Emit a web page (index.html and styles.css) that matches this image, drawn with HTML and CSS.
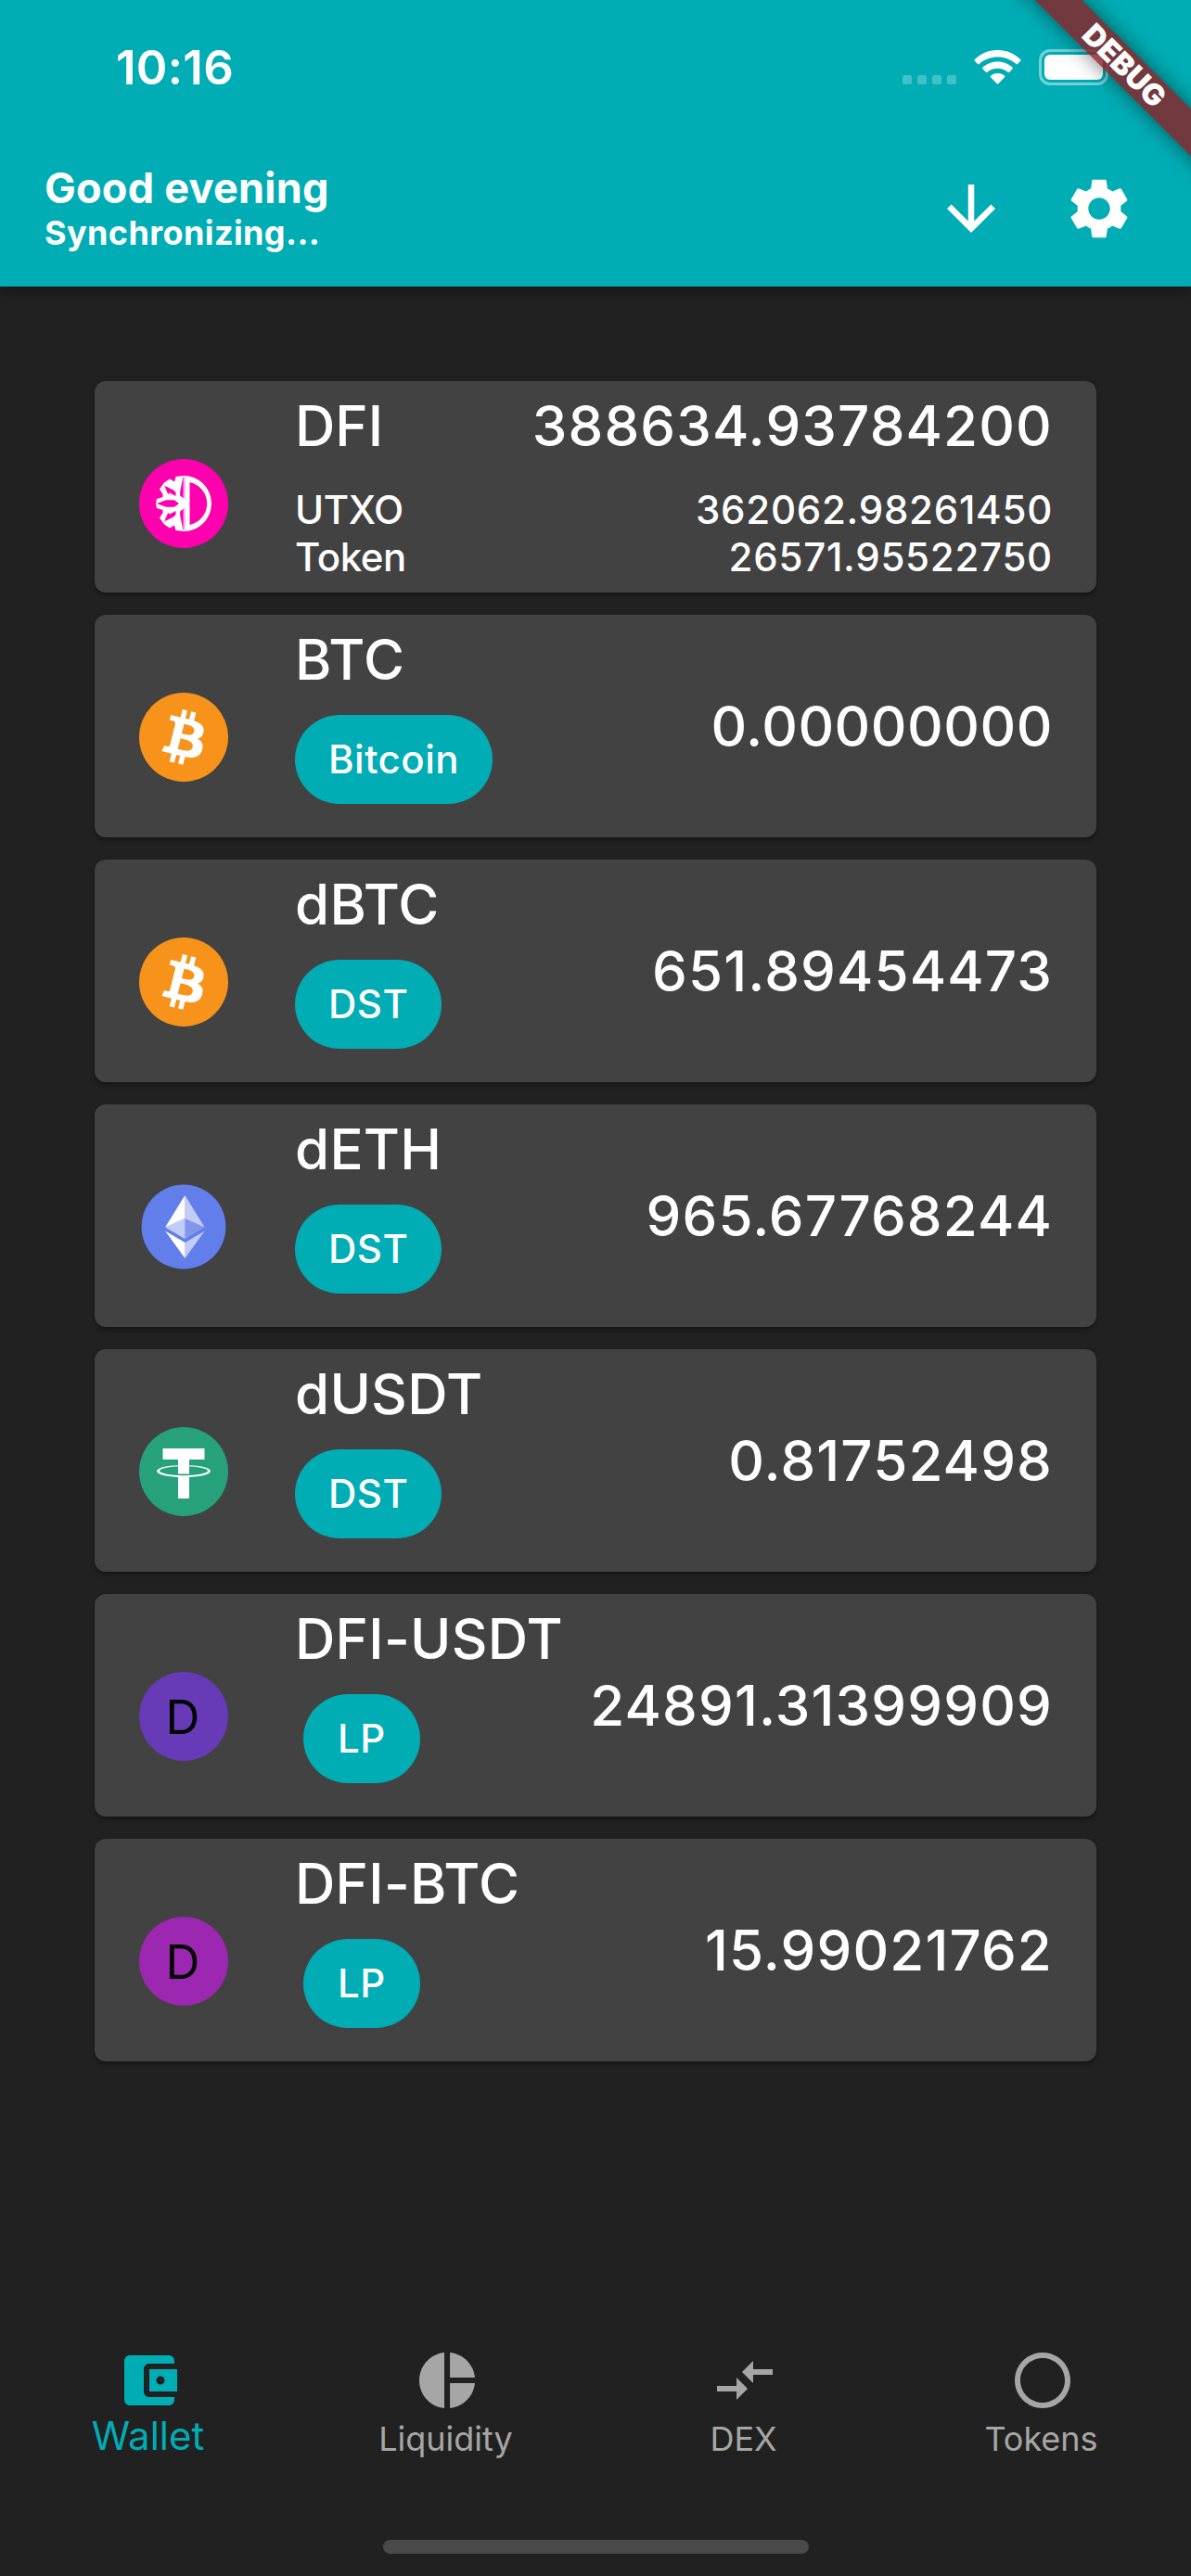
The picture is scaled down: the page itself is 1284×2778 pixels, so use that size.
FILE: index.html
```html
<!DOCTYPE html>
<html lang="en">
<head>
<meta charset="utf-8">
<title>Wallet</title>
<link rel="stylesheet" href="styles.css">
</head>
<body>
<header class="top">
  <div class="status">
    <span class="clock">10:16</span>
    <svg class="signal" viewBox="0 0 58 10"><rect width="10" height="10" rx="2.5"/><rect x="16" width="10" height="10" rx="2.5"/><rect x="32" width="10" height="10" rx="2.5"/><rect x="48" width="10" height="10" rx="2.5"/></svg>
    <svg class="wifi" viewBox="0 0 51 37"><path d="M25.500 0C35.500 0 44 4 50.200 10.200Q51 11 50.200 11.800L47 15Q46.200 15.800 45.400 15C40 10 33 7.500 25.500 7.500S11 10 5.600 15Q4.800 15.800 4 15L.8 11.800Q0 11 .8 10.200C7 4 15.500 0 25.500 0Z"/><path d="M25.500 12.500C32 12.500 37.500 15 41.500 18.700Q42.400 19.500 41.600 20.300L38.200 23.700Q37.400 24.500 36.500 23.700C33.500 21.200 29.700 19.800 25.500 19.800S17.500 21.200 14.500 23.700Q13.600 24.500 12.800 23.700L9.400 20.300Q8.600 19.500 9.500 18.700C13.500 15 19 12.500 25.500 12.500Z"/><path d="M25.500 25C28.500 25 31 26 33 27.700Q33.800 28.400 33 29.300L26.300 36.200Q25.500 37 24.700 36.200L18 29.300Q17.200 28.400 18 27.700C20 26 22.500 25 25.500 25Z"/></svg>
    <svg class="battery" viewBox="0 0 82 39"><rect x="1.500" y="1.500" width="72" height="36" rx="10.500" fill="none" stroke="#fff" stroke-opacity=".45" stroke-width="3"/><rect x="6" y="6" width="63" height="27" rx="6" fill="#fff"/><path d="M78 13.500Q82 16 82 19.500T78 25.500Z" fill="#fff" fill-opacity=".5"/></svg>
  </div>
  <div class="appbar">
    <div class="titles">
      <h1 class="greeting">Good evening</h1>
      <p class="sync">Synchronizing...</p>
    </div>
    <svg class="action" viewBox="0 0 24 24"><path d="M20 12l-1.410-1.410L13 16.170V4h-2v12.170l-5.580-5.590L4 12l8 8 8-8z"/></svg>
    <svg class="action" viewBox="0 0 24 24"><path d="M19.140 12.940c.04-.3.06-.61.06-.94 0-.32-.02-.64-.07-.94l2.030-1.580c.18-.14.23-.41.12-.61l-1.920-3.320c-.12-.22-.37-.29-.59-.22l-2.390.96c-.5-.38-1.030-.7-1.620-.94l-.36-2.540c-.04-.24-.24-.41-.48-.41h-3.840c-.24 0-.43.17-.47.41l-.36 2.540c-.59.24-1.130.57-1.620.94l-2.390-.96c-.22-.08-.47 0-.59.22L2.740 8.870c-.12.21-.08.47.12.61l2.030 1.580c-.05.3-.09.63-.09.94s.02.64.07.94l-2.030 1.580c-.18.14-.23.41-.12.61l1.920 3.320c.12.22.37.29.59.22l2.390-.96c.5.38 1.030.7 1.620.94l.36 2.540c.05.24.24.41.48.41h3.840c.24 0 .44-.17.47-.41l.36-2.540c.59-.24 1.130-.56 1.620-.94l2.390.96c.22.08.47 0 .59-.22l1.920-3.320c.12-.22.07-.47-.12-.61l-2.010-1.580zM12 15.600c-1.980 0-3.600-1.620-3.600-3.600s1.620-3.600 3.600-3.600 3.600 1.620 3.600 3.600-1.620 3.600-3.600 3.600z"/></svg>
  </div>
  <div class="ribbon-corner"><div class="ribbon">DEBUG</div></div>
</header>

<main class="list">
  <article class="card card-split">
    <svg class="coin" viewBox="0 0 96 96"><circle cx="48" cy="48" r="48" fill="#ff00af"/><path d="M48 18a30 30 0 0 1 0 60L39.500 77 38 71.500 33 74.500 27 70.500 22 63.500 25.500 58V55L19 53 18 48 19 43 25.500 41V38L22 32.500 27 25.500 33 21.500 38 24.500 39.500 19Z" fill="#fff"/><g fill="#ff00af"><path d="M54.500 25a23.500 23.500 0 0 1 0 46z"/><path d="M19 48L29 44.300H38L43 48L38 51.700H29z"/><path id="flake-cuts" d="M47.300 19.500L44.200 35V39.500L49.200 43.500V19.500zM28 29L37 33.500 39.500 36V40L33 36.500 31 36zM26.500 27.500L33 37.500H31z"/><use href="#flake-cuts" transform="matrix(1 0 0 -1 0 96)"/></g><path d="M48.200 18v60" stroke="#fff" stroke-width="1"/></svg>
    <div class="rows">
      <div class="row row-main"><span>DFI</span><span class="figure">388634.93784200</span></div>
      <div class="row"><span class="label">UTXO</span><span class="figure">362062.98261450</span></div>
      <div class="row"><span class="label">Token</span><span class="figure">26571.95522750</span></div>
    </div>
  </article>
  <article class="card">
    <svg class="coin" viewBox="0 0 32 32"><use href="#btc"/></svg>
    <div class="token"><span class="name">BTC</span><span class="chip">Bitcoin</span></div>
    <span class="amount amount-zero">0.00000000</span>
  </article>
  <article class="card">
    <svg class="coin" viewBox="0 0 32 32"><use href="#btc"/></svg>
    <div class="token"><span class="name">dBTC</span><span class="chip">DST</span></div>
    <span class="amount">651.89454473</span>
  </article>
  <article class="card">
    <svg class="coin" viewBox="-.9 -.9 33.800 33.800"><circle cx="16" cy="16" r="16" fill="#627eea"/><g fill="#fff"><path fill-opacity=".602" d="M16.498 4v8.870l7.497 3.350z"/><path d="M16.498 4L9 16.220l7.498-3.350z"/><path fill-opacity=".602" d="M16.498 21.968v6.027L24 17.616z"/><path d="M16.498 27.995v-6.028L9 17.616z"/><path fill-opacity=".2" d="M16.498 20.573l7.497-4.353-7.497-3.348z"/><path fill-opacity=".602" d="M9 16.220l7.498 4.353v-7.701z"/></g></svg>
    <div class="token"><span class="name">dETH</span><span class="chip">DST</span></div>
    <span class="amount">965.67768244</span>
  </article>
  <article class="card">
    <svg class="coin" viewBox="0 0 96 96"><circle cx="48" cy="48" r="48" fill="#26a17b"/><path fill-rule="evenodd" d="M19 47.500a29 6.600 0 1 0 58 0a29 6.600 0 1 0-58 0zM22 47.200a26 5 0 1 0 52 0a26 5 0 1 0-52 0z" fill="#fff"/><path d="M25.500 23h45v12H54v15.500H42V35H25.500zM42 54h12v23H42z" fill="#fff"/></svg>
    <div class="token"><span class="name">dUSDT</span><span class="chip">DST</span></div>
    <span class="amount">0.81752498</span>
  </article>
  <article class="card">
    <span class="coin avatar violet">D</span>
    <div class="token"><span class="name">DFI-USDT</span><span class="chip chip-lp">LP</span></div>
    <span class="amount">24891.31399909</span>
  </article>
  <article class="card">
    <span class="coin avatar purple">D</span>
    <div class="token"><span class="name">DFI-BTC</span><span class="chip chip-lp">LP</span></div>
    <span class="amount">15.99021762</span>
  </article>
</main>

<footer class="bottom">
  <nav class="tabs">
    <div class="tab active"><svg viewBox="0 0 24 24"><path d="M21 18v1c0 1.100-.9 2-2 2H5c-1.110 0-2-.9-2-2V5c0-1.100.89-2 2-2h14c1.100 0 2 .9 2 2v1h-9c-1.110 0-2 .9-2 2v8c0 1.100.89 2 2 2h9zm-9-2h10V8H12v8zm4-2.500c-.83 0-1.500-.67-1.500-1.500s.67-1.500 1.500-1.500 1.500.67 1.500 1.500-.67 1.500-1.500 1.500z"/></svg><span>Wallet</span></div>
    <div class="tab"><svg viewBox="0 0 24 24"><path d="M11 2v20c-5.070-.5-9-4.790-9-10s3.930-9.500 9-10zm2.030 0v8.990H22c-.47-4.740-4.240-8.520-8.970-8.990zm0 11.010V22c4.740-.47 8.500-4.250 8.970-8.990h-8.970z"/></svg><span>Liquidity</span></div>
    <div class="tab"><svg viewBox="0 0 24 24"><path d="M9.010 14H2v2h7.010v3L13 15l-3.990-4v3zm5.980-1v-3H22V8h-7.010V5L11 9l3.990 4z"/></svg><span>DEX</span></div>
    <div class="tab"><svg viewBox="0 0 24 24"><path d="M12 2C6.480 2 2 6.480 2 12s4.480 10 10 10 10-4.480 10-10S17.520 2 12 2zm0 18c-4.420 0-8-3.580-8-8s3.580-8 8-8 8 3.580 8 8-3.580 8-8 8z"/></svg><span>Tokens</span></div>
  </nav>
  <div class="home-bar"></div>
</footer>

<svg class="defs" width="0" height="0"><defs><g id="btc"><circle cx="16" cy="16" r="16" fill="#f7931a"/><path fill="#fff" d="M23.189 14.020c.314-2.096-1.283-3.223-3.465-3.975l.708-2.840-1.728-.43-.69 2.765c-.454-.114-.92-.22-1.385-.326l.695-2.783L15.596 6l-.708 2.839c-.376-.086-.746-.17-1.104-.26l.002-.009-2.384-.595-.46 1.846s1.283.294 1.256.312c.7.175.826.638.805 1.006l-.806 3.235c.048.012.11.030.18.057l-.183-.045-1.130 4.532c-.086.212-.303.531-.793.410.018.025-1.256-.313-1.256-.313l-.858 1.978 2.250.561c.418.105.828.215 1.231.318l-.715 2.872 1.727.43.708-2.840c.472.127.930.245 1.378.357l-.706 2.828 1.728.430.715-2.866c2.948.558 5.164.333 6.097-2.333.752-2.146-.037-3.385-1.588-4.192 1.130-.260 1.980-1.003 2.207-2.538zm-3.950 5.538c-.533 2.147-4.148.986-5.320.695l.950-3.805c1.172.293 4.929.872 4.370 3.110zm.535-5.569c-.487 1.953-3.495.960-4.470.717l.860-3.450c.975.243 4.118.696 3.610 2.733z"/></g></defs></svg>
</body>
</html>
```
FILE: styles.css
```css
* { box-sizing: border-box; }
body {
  margin: 0;
  height: 2778px;
  display: flex;
  flex-direction: column;
  background: #212121;
  color: #fff;
  font-family: Inter, "Noto Sans", sans-serif;
  overflow: hidden;
}
.defs { position: absolute; }

.top {
  position: relative;
  height: 309px;
  background: #00adb5;
  box-shadow: 0 6px 12px rgba(0, 0, 0, .3);
}
.status {
  height: 141px;
  display: flex;
  align-items: flex-start;
  padding: 53px 82px 0 125px;
}
.clock {
  flex: 1;
  margin-top: -1px;
  font-size: 51px;
  line-height: 41px;
  font-weight: 600;
  letter-spacing: .3px;
}
.signal { width: 58px; height: 10px; margin-top: 28px; fill: #fff; fill-opacity: .25; }
.wifi { width: 51px; height: 37px; margin: 1px 19px 0 19px; fill: #fff; }
.battery { width: 82px; height: 39px; }
.appbar {
  height: 168px;
  display: flex;
  align-items: center;
  padding: 0 60px 0 48px;
}
.titles { flex: 1; padding-bottom: 2px; }
.greeting, .sync { margin: 0; font-weight: 700; white-space: nowrap; }
.greeting { font-size: 45px; line-height: 54px; letter-spacing: .25px; }
.sync { font-size: 36px; line-height: 43px; letter-spacing: .4px; }
.action { width: 78px; height: 78px; margin-left: 60px; fill: #fff; }
.ribbon-corner {
  position: absolute;
  top: 0;
  right: 0;
  width: 260px;
  height: 260px;
  overflow: hidden;
}
.ribbon {
  position: absolute;
  left: 38px;
  top: 53px;
  width: 300px;
  height: 36px;
  transform: rotate(45deg);
  background: rgba(139, 32, 37, .82);
  box-shadow: 0 0 22px rgba(0, 0, 0, .5);
  text-align: center;
  font-size: 32px;
  line-height: 36px;
  font-weight: 900;
}

.list {
  flex: 1;
  display: flex;
  flex-direction: column;
  gap: 24px;
  padding: 102px 102px 0;
}
.card {
  height: 240px;
  display: flex;
  align-items: flex-start;
  padding: 0 47px 0 48px;
  border-radius: 12px;
  background: #424242;
  box-shadow: 0 3px 4px rgba(0, 0, 0, .35);
  font-weight: 500;
}
.card-split { height: 228px; }
.coin { flex: none; width: 96px; height: 96px; margin: 84px 72px 0 0; }
.avatar {
  padding-right: 2px;
  border-radius: 50%;
  color: #000;
  font-size: 51px;
  font-weight: 400;
  line-height: 97px;
  text-align: center;
}
.violet { background: #673ab7; }
.purple { background: #9c27b0; }
.token { flex: 1; display: flex; flex-direction: column; align-items: flex-start; }
.name, .amount, .row-main { font-size: 60px; line-height: 72px; }
.name { margin-top: 12px; white-space: nowrap; letter-spacing: .3px; }
.chip {
  height: 96px;
  margin-top: 24px;
  padding: 0 36px;
  border-radius: 48px;
  background: #00adb5;
  font-size: 42px;
  line-height: 95px;
  letter-spacing: .5px;
}
.chip-lp { margin-left: 9px; padding: 0 37px; }
.amount { margin-top: 84px; letter-spacing: 1.15px; }
.amount-zero { letter-spacing: .5px; }
.rows { flex: 1; padding-top: 12px; }
.row { display: flex; justify-content: space-between; font-size: 42px; line-height: 51px; }
.row-main { font-size: 60px; line-height: 72px; margin-bottom: 29px; }
.figure { letter-spacing: .75px; }
.row-main .figure { letter-spacing: 1.15px; }
.label { letter-spacing: -.4px; }

.bottom { height: 272px; border-top: 1px solid #1f1f1f; }
.tabs { display: flex; height: 223px; padding-top: 24px; }
.tab {
  flex: 1;
  display: flex;
  flex-direction: column;
  align-items: center;
  color: #a6a6a6;
  font-size: 36px;
  line-height: 44px;
}
.tab svg { width: 72px; height: 72px; margin: 0 0 5px; fill: currentColor; }
.tab span { padding-right: 2px; }
.active { color: #00adb5; font-size: 42px; }
.tab.active svg { margin-bottom: 2px; }
.home-bar { width: 459px; height: 15px; margin: 9px auto 0; border-radius: 8px; background: #4a4a4a; }
```
